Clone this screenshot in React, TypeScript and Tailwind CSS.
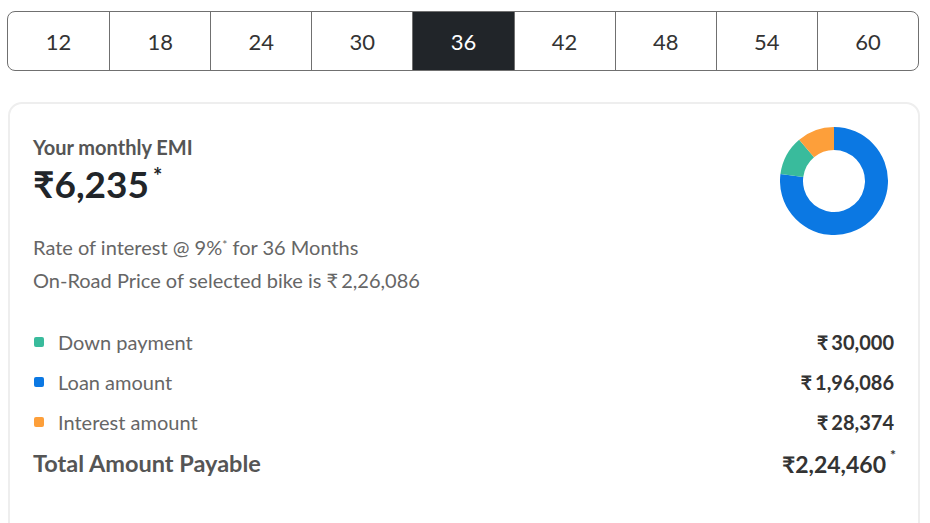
import React from "react";

const tenures = [12, 18, 24, 30, 36, 42, 48, 54, 60];
const selected = 36;

const slices = [
  { label: "Loan amount", value: 196086, color: "#0b78e3" },
  { label: "Down payment", value: 30000, color: "#39bb9c" },
  { label: "Interest amount", value: 28374, color: "#fd9f3a" },
];

function polar(cx: number, cy: number, r: number, deg: number) {
  const a = ((deg - 90) * Math.PI) / 180;
  return [cx + r * Math.cos(a), cy + r * Math.sin(a)];
}

function arcPath(cx: number, cy: number, ro: number, ri: number, start: number, end: number) {
  const large = end - start > 180 ? 1 : 0;
  const [x1, y1] = polar(cx, cy, ro, start);
  const [x2, y2] = polar(cx, cy, ro, end);
  const [x3, y3] = polar(cx, cy, ri, end);
  const [x4, y4] = polar(cx, cy, ri, start);
  return `M${x1} ${y1} A${ro} ${ro} 0 ${large} 1 ${x2} ${y2} L${x3} ${y3} A${ri} ${ri} 0 ${large} 0 ${x4} ${y4} Z`;
}

function Donut() {
  const total = slices.reduce((s, x) => s + x.value, 0);
  let angle = 0;
  return (
    <svg width="108" height="108" viewBox="0 0 108 108">
      {slices.map((s) => {
        const sweep = (s.value / total) * 360;
        const d = arcPath(54, 54, 54, 31, angle, angle + sweep);
        angle += sweep;
        return <path key={s.label} d={d} fill={s.color} />;
      })}
    </svg>
  );
}

const legend = [
  { label: "Down payment", amount: "30,000", color: "bg-[#39bb9c]" },
  { label: "Loan amount", amount: "1,96,086", color: "bg-[#0b78e3]" },
  { label: "Interest amount", amount: "28,374", color: "bg-[#fd9f3a]" },
];

export default function App() {
  return (
    <div className="w-[930px] h-[523px] overflow-hidden bg-white font-['Lato','Noto_Sans',sans-serif]">
      <div className="mx-[7px] mt-[11px] w-[912px] h-[60px] grid grid-cols-9 border border-[#707070] rounded-lg overflow-hidden">
        {tenures.map((t, i) => (
          <div
            key={t}
            className={`flex items-center justify-center text-[22px] ${i > 0 ? "border-l border-[#707070]" : ""} ${
              t === selected ? "bg-[#212529] text-white" : "text-[#333]"
            }`}
          >
            {t}
          </div>
        ))}
      </div>

      <div className="mx-[8px] mt-[31px] w-[912px] h-[460px] border-2 border-[#eeeeee] rounded-[14px] pl-[23px] pr-[24px] pt-[23px]">
        <div className="flex items-start justify-between">
          <div className="pt-[8px]">
            <div className="text-[20px] leading-[24px] font-bold text-[#555]">Your monthly EMI</div>
            <div className="mt-[5px] text-[37px] leading-[40px] font-bold text-[#212529] flex items-start">
              <span>₹6,235</span>
              <span className="text-[22px] leading-[22px] ml-[4px] mt-[1px]">*</span>
            </div>
            <div className="mt-[27px] text-[20px] leading-[33px] text-[#666]">
              <div>
                Rate of interest @ 9%<sup className="text-[12px]">*</sup> for 36 Months
              </div>
              <div>
                On-Road Price of selected bike is ₹<span className="ml-[3px]">2,26,086</span>
              </div>
            </div>
          </div>
          <div className="mr-[6px]">
            <Donut />
          </div>
        </div>

        <div className="mt-[25px]">
          {legend.map((l) => (
            <div key={l.label} className="flex items-center justify-between h-[40px] text-[20px]">
              <div className="flex items-center text-[#666]">
                <span className={`w-[10px] h-[10px] rounded-[2px] ml-[1px] mr-[14px] ${l.color}`} />
                {l.label}
              </div>
              <div className="font-bold text-[#333]">
                ₹<span className="ml-[3px]">{l.amount}</span>
              </div>
            </div>
          ))}
          <div className="flex items-center justify-between h-[42px] mt-[1px]">
            <div className="text-[23.5px] font-bold text-[#555]">Total Amount Payable</div>
            <div className="relative text-[23px] font-bold text-[#333] mr-[8px]">
              ₹2,24,460
              <span className="absolute -right-[10px] -top-[3px] text-[14px]">*</span>
            </div>
          </div>
        </div>
      </div>
    </div>
  );
}
